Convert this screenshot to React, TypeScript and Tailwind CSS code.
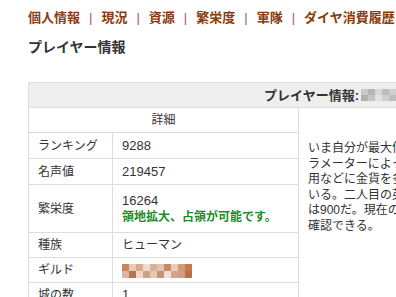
const font = { fontFamily: '"Liberation Sans", "Noto Sans CJK JP", sans-serif' };

const navItems = ["個人情報", "現況", "資源", "繁栄度", "軍隊", "ダイヤ消費履歴"];

const rows: { label: string; value: React.ReactNode; h: string }[] = [
  { label: "ランキング", value: "9288", h: "h-[26px]" },
  { label: "名声値", value: "219457", h: "h-[26px]" },
  {
    label: "繁栄度",
    h: "h-[48px]",
    value: (
      <div className="leading-[17px]">
        <div>16264</div>
        <div className="text-[12px] font-bold text-[#1e8c28]">領地拡大、占領が可能です。</div>
      </div>
    ),
  },
  { label: "種族", value: <span className="text-[12px]">ヒューマン</span>, h: "h-[25px]" },
  { label: "ギルド", value: <GuildBlur />, h: "h-[25px]" },
  { label: "城の数", value: "1", h: "h-[25px]" },
];

function NameBlur() {
  const shades = ["#c9c9c9", "#b5b5b5", "#d8d8d8", "#bdbdbd", "#cfcfcf", "#e2e2e2", "#c4c4c4", "#b0b0b0"];
  return (
    <span className="inline-flex flex-col align-middle ml-[2px]">
      <span className="flex">
        {shades.map((c, i) => (
          <span key={i} className="w-[7px] h-[6px]" style={{ background: c }} />
        ))}
      </span>
      <span className="flex">
        {shades
          .slice()
          .reverse()
          .map((c, i) => (
            <span key={i} className="w-[7px] h-[6px]" style={{ background: c }} />
          ))}
      </span>
    </span>
  );
}

function GuildBlur() {
  const top = ["#c9875e", "#e7c9b8", "#d7ab90", "#efdccf", "#d9b29c", "#e4c3ae", "#c58a66", "#e8cdbd", "#d29a78", "#c07a50"];
  const bottom = ["#dcb6a0", "#b8764e", "#eed8ca", "#d0a284", "#e6c7b3", "#c99373", "#efe0d5", "#d5a78a", "#caa088", "#b96e45"];
  return (
    <span className="inline-flex flex-col align-middle">
      <span className="flex">
        {top.map((c, i) => (
          <span key={i} className="w-[7px] h-[7px]" style={{ background: c }} />
        ))}
      </span>
      <span className="flex">
        {bottom.map((c, i) => (
          <span key={i} className="w-[7px] h-[7px]" style={{ background: c }} />
        ))}
      </span>
    </span>
  );
}

export default function App() {
  return (
    <div className="w-[396px] h-[297px] overflow-hidden bg-white text-[#333]" style={font}>
      <div className="pl-[28px] pt-[9px]">
        {/* Navigation */}
        <nav className="flex items-center gap-[9px] whitespace-nowrap text-[13px] font-bold leading-[17px]">
          {navItems.map((item, i) => (
            <span key={item} className="flex items-center gap-[9px]">
              {i > 0 && <span className="text-[#b0506a] font-normal">|</span>}
              <a className="text-[#8a3b0c]">{item}</a>
            </span>
          ))}
        </nav>

        <h2 className="mt-[12px] text-[14px] font-bold leading-[18px] text-[#333]">プレイヤー情報</h2>

        {/* Player table */}
        <table className="mt-[26px] w-[393px] border-collapse table-fixed text-[13px]">
          <colgroup>
            <col className="w-[84px]" />
            <col className="w-[186px]" />
            <col className="w-[123px]" />
          </colgroup>
          <tbody>
            <tr className="h-[25px] bg-[#eeeeee]">
              <td colSpan={3} className="border border-[#dddddd] pr-[4px] text-right whitespace-nowrap">
                <span className="font-bold text-[13px] align-middle">プレイヤー情報:</span>
                <NameBlur />
              </td>
            </tr>
            <tr className="h-[25px]">
              <td colSpan={2} className="border border-[#dddddd] text-center text-[12px]">
                詳細
              </td>
              <td rowSpan={7} className="border border-[#dddddd] align-top pl-[9px] pt-[33px] text-[12px] leading-[15.6px] whitespace-nowrap overflow-hidden">
                いま自分が最大何人の英雄を
                <br />
                ラメーターによって決まる。
                <br />
                用などに金貨を多く消費して
                <br />
                いる。二人目の英雄を雇う
                <br />
                は900だ。現在の繁栄度は
                <br />
                確認できる。
              </td>
            </tr>
            {rows.map((r) => (
              <tr key={r.label} className={r.h}>
                <td className="border border-[#dddddd] pl-[9px] text-[12px] whitespace-nowrap">{r.label}</td>
                <td className="border border-[#dddddd] pl-[9px] whitespace-nowrap">{r.value}</td>
              </tr>
            ))}
          </tbody>
        </table>
      </div>
    </div>
  );
}
